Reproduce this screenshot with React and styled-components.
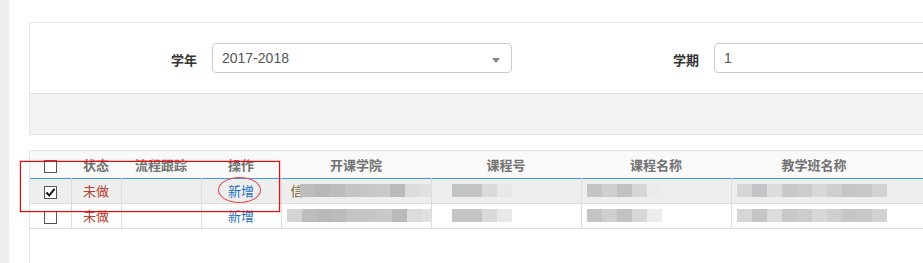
import React from "react";
import styled, { createGlobalStyle } from "styled-components";

const Global = createGlobalStyle`
  body {
    margin: 0;
    background: #fff;
    font-family: "Liberation Sans", "Noto Sans CJK SC", sans-serif;
    font-size: 13px;
    color: #333;
  }
`;

const Page = styled.div`
  display: flex;
  height: 263px;
  overflow: hidden;
`;

const SideStrip = styled.div`
  width: 9px;
  flex: none;
  background: #eeeeee;
`;

const Content = styled.div`
  flex: 1;
  padding: 22px 0 0 20px;
  min-width: 0;
`;

const Panel = styled.div`
  border: 1px solid #e3e3e3;
  border-right: none;
  margin-right: -2px;
`;

const FormRow = styled.div`
  display: flex;
  align-items: center;
  height: 70px;
  box-sizing: border-box;
  padding-top: 1px;
`;

const Field = styled.div`
  display: flex;
  align-items: center;
  width: ${(p) => p.$width}px;
  flex: none;
`;

const Label = styled.label`
  width: ${(p) => p.$width}px;
  flex: none;
  text-align: right;
  padding-right: 15px;
  box-sizing: border-box;
  font-weight: bold;
  font-size: 13px;
  color: #333;
  margin-top: 2px;
`;

const InputBox = styled.div`
  position: relative;
  width: ${(p) => p.$width}px;
  height: 30px;
  box-sizing: border-box;
  border: 1px solid #cccccc;
  border-radius: 4px;
  padding: 0 9px;
  display: flex;
  align-items: center;
  font-size: 14px;
  color: #555;
  margin-bottom: 2px;
`;

const Caret = styled.span`
  position: absolute;
  right: 11px;
  top: 14px;
  width: 0;
  height: 0;
  border-left: 4px solid transparent;
  border-right: 4px solid transparent;
  border-top: 5px solid #888;
`;

const PanelFooter = styled.div`
  height: 40px;
  background: #f2f2f2;
  border-top: 1px solid #e3e3e3;
`;

const TableWrap = styled.div`
  position: relative;
  margin-top: 15px;
  border-top: 1px solid #e3e3e3;
  border-left: 1px solid #e3e3e3;
  height: 140px;
`;

const Table = styled.table`
  border-collapse: collapse;
  table-layout: fixed;
  width: ${(p) => p.$width}px;
  font-size: 13px;
`;

const HeadRow = styled.tr`
  background: #f9f9f9;
  height: 27px;
  border-bottom: 1px solid #3c96e0;
`;

const Th = styled.th`
  width: ${(p) => p.$w}px;
  font-weight: bold;
  color: #727272;
  padding: 0;
  text-align: center;
  vertical-align: middle;
`;

const Row = styled.tr`
  height: 25px;
  background: ${(p) => (p.$active ? "#eeeeee" : "#ffffff")};
  border-bottom: 1px solid #dddddd;
`;

const Td = styled.td`
  padding: 0;
  text-align: ${(p) => (p.$left ? "left" : "center")};
  vertical-align: middle;
  border-right: ${(p) => (p.$last ? "none" : "1px solid #dddddd")};
  color: ${(p) => p.$color || "#333"};
  overflow: hidden;
  white-space: nowrap;
`;

const Check = styled.span`
  display: inline-block;
  width: 13px;
  height: 13px;
  box-sizing: border-box;
  border: 1px solid #555;
  background: #fff;
  vertical-align: middle;
  position: relative;
  top: 1px;
`;

const Mosaic = styled.div`
  display: flex;
  height: 13px;
  margin-left: ${(p) => p.$offset}px;
  filter: blur(0.6px);
`;

const Tile = styled.span`
  width: 15px;
  height: 13px;
  flex: none;
  background: ${(p) => p.$c};
`;

const Glyph = styled.span`
  display: flex;
  align-items: center;
  gap: 2px;
  color: #7a5a2a;
`;

const RedBox = styled.div`
  position: absolute;
  left: -10px;
  top: 10px;
  width: 258px;
  height: 49px;
  border: 1px solid #ff0000;
  box-shadow: 0 0 0 0.4px rgba(255, 60, 60, 0.6);
  pointer-events: none;
  z-index: 2;
`;

const RedRing = styled.div`
  position: absolute;
  left: 188px;
  top: 26px;
  width: 41px;
  height: 24px;
  border: 1px solid #e44646;
  border-radius: 50%;
  pointer-events: none;
  z-index: 2;
`;

const CheckMark = () => (
  <svg width="11" height="11" viewBox="0 0 11 11" style={{ position: "absolute", left: 0, top: 0 }}>
    <path d="M1.5 5.5 L4.2 8.5 L9.5 1.8" fill="none" stroke="#111" strokeWidth="2" />
  </svg>
);

const blur = {
  college: ["#bdbdbd", "#b8b8b8", "#bcbcbc", "#c4c4c4", "#c6c6c6", "#c9c9c9", "#bababa", "#dcdcdc", "#e0e0e0", "#dedede"],
  code: ["#ffffff00", "#c2c4c6", "#c4c4c4", "#dadada", "#e8e8e8"],
  name: ["#c4c4c4", "#cfcfcf", "#c2c2c2", "#d6d6d6", "#ececec"],
  klass: ["#d6d6d6", "#c4c4c6", "#dcdcdc", "#c8c8c8", "#cccccc", "#d8d8d8", "#cfcfcf", "#c6c6c6", "#c8c8c8", "#d0d2d4"],
};

const cols = [
  { w: 41, title: "" },
  { w: 50, title: "状态" },
  { w: 80, title: "流程跟踪" },
  { w: 80, title: "操作" },
  { w: 150, title: "开课学院" },
  { w: 150, title: "课程号" },
  { w: 150, title: "课程名称" },
  { w: 166, title: "教学班名称" },
  { w: 120, title: "" },
];

const tableWidth = cols.reduce((s, c) => s + c.w, 0);

function BlurCells({ first }) {
  return (
    <>
      <Td $left>
        {first ? (
          <Glyph>
            <span style={{ marginLeft: 9 }}>信</span>
            <Mosaic $offset={-6}>
              {blur.college.map((c, i) => <Tile key={i} $c={c} />)}
            </Mosaic>
          </Glyph>
        ) : (
          <Mosaic $offset={5}>
            {["#d4d4d4", ...blur.college].map((c, i) => <Tile key={i} $c={c} />)}
          </Mosaic>
        )}
      </Td>
      <Td $left>
        <Mosaic $offset={5}>{blur.code.map((c, i) => <Tile key={i} $c={c} />)}</Mosaic>
      </Td>
      <Td $left>
        <Mosaic $offset={5}>{blur.name.map((c, i) => <Tile key={i} $c={c} />)}</Mosaic>
      </Td>
      <Td $left $last>
        <Mosaic $offset={5}>{blur.klass.map((c, i) => <Tile key={i} $c={c} />)}</Mosaic>
      </Td>
      <Td $last />
    </>
  );
}

export default function App() {
  return (
    <Page>
      <Global />
      <SideStrip />
      <Content>
        <Panel>
          <FormRow>
            <Field $width={482}>
              <Label $width={182}>学年</Label>
              <InputBox $width={300}>
                2017-2018
                <Caret />
              </InputBox>
            </Field>
            <Field $width={500}>
              <Label $width={202}>学期</Label>
              <InputBox $width={300}>1</InputBox>
            </Field>
          </FormRow>
          <PanelFooter />
        </Panel>
        <TableWrap>
          <Table $width={tableWidth}>
            <thead>
              <HeadRow>
                {cols.map((c, i) => (
                  <Th key={i} $w={c.w}>
                    {i === 0 ? <Check /> : c.title}
                  </Th>
                ))}
              </HeadRow>
            </thead>
            <tbody>
              <Row $active>
                <Td>
                  <Check>
                    <CheckMark />
                  </Check>
                </Td>
                <Td $color="#b5412e">未做</Td>
                <Td />
                <Td $color="#1e6fbf">新增</Td>
                <BlurCells first />
              </Row>
              <Row>
                <Td>
                  <Check />
                </Td>
                <Td $color="#b5412e">未做</Td>
                <Td />
                <Td $color="#1e6fbf">新增</Td>
                <BlurCells />
              </Row>
            </tbody>
          </Table>
          <RedBox />
          <RedRing />
        </TableWrap>
      </Content>
    </Page>
  );
}
